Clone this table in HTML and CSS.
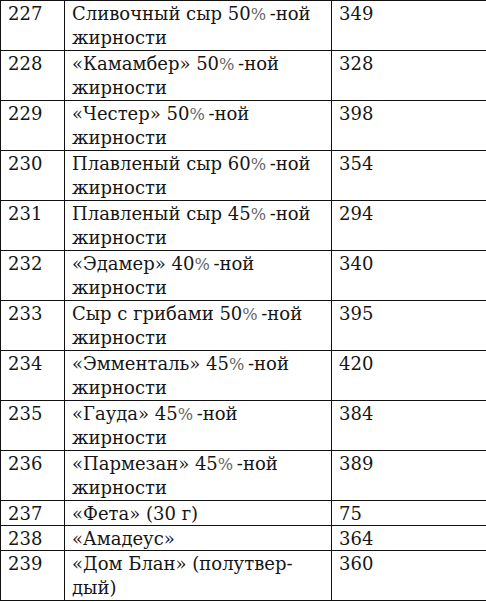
FILE: index.html
```html
<!DOCTYPE html>
<html lang="ru">
<head>
<meta charset="utf-8">
<link rel="stylesheet" href="styles.css">
</head>
<body>
<table class="tbl">
<colgroup><col class="c1"><col class="c2"><col class="c3"></colgroup>
<tr><td>227</td><td>Сливочный сыр 50<span class="pc">%</span>&#8201;-ной<br>жирности</td><td>349</td></tr>
<tr><td>228</td><td>«Камамбер» 50<span class="pc">%</span>&#8201;-ной<br>жирности</td><td>328</td></tr>
<tr><td>229</td><td>«Честер» 50<span class="pc">%</span>&#8201;-ной<br>жирности</td><td>398</td></tr>
<tr><td>230</td><td>Плавленый сыр 60<span class="pc">%</span>&#8201;-ной<br>жирности</td><td>354</td></tr>
<tr><td>231</td><td>Плавленый сыр 45<span class="pc">%</span>&#8201;-ной<br>жирности</td><td>294</td></tr>
<tr><td>232</td><td>«Эдамер» 40<span class="pc">%</span>&#8201;-ной<br>жирности</td><td>340</td></tr>
<tr><td>233</td><td>Сыр с грибами 50<span class="pc">%</span>&#8201;-ной<br>жирности</td><td>395</td></tr>
<tr><td>234</td><td>«Эмменталь» 45<span class="pc">%</span>&#8201;-ной<br>жирности</td><td>420</td></tr>
<tr><td>235</td><td>«Гауда» 45<span class="pc">%</span>&#8201;-ной<br>жирности</td><td>384</td></tr>
<tr><td>236</td><td>«Пармезан» 45<span class="pc">%</span>&#8201;-ной<br>жирности</td><td>389</td></tr>
<tr class="one"><td>237</td><td>«Фета» (30 г)</td><td>75</td></tr>
<tr class="one"><td>238</td><td>«Амадеус»</td><td>364</td></tr>
<tr><td>239</td><td>«Дом Блан» (полутвер-<br>дый)</td><td>360</td></tr>
</table>
</body>
</html>
```
FILE: styles.css
```css
html, body {
  margin: 0;
  padding: 0;
  background: #fff;
}
.tbl {
  border-collapse: collapse;
  table-layout: fixed;
  width: 486px;
  font-family: "DejaVu Serif", "Liberation Serif", serif;
  font-size: 18px;
  line-height: 24px;
  color: #161616;
}
.c1 { width: 64px; }
.c2 { width: 267px; }
.c3 { width: 155px; }
.tbl td {
  border: 1px solid #111;
  padding: 1px 0 0 7px;
  vertical-align: top;
  white-space: nowrap;
}
.tbl .one td {
  line-height: 23px;
}
.pc {
  color: #666;
  font-size: 0.9em;
  line-height: 1;
}
```
